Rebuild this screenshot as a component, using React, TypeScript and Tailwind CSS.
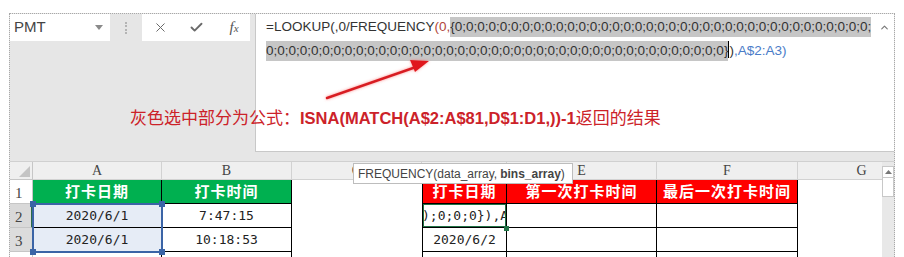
import { X, Check, ChevronUp } from 'lucide-react';

const zeros = (n: number) => '0;'.repeat(n);

const cjk = "font-['Noto_Sans_CJK_SC',sans-serif]";
const mono = "font-['DejaVu_Sans_Mono',monospace]";
const serif = "font-['Liberation_Serif',serif]";

const FormulaBar = () => (
  <div className="flex h-[138px] shrink-0">
    {/* name box + buttons */}
    <div className="flex w-[245px] items-start">
      <div className="flex h-[27px] w-[100px] items-center justify-between bg-white pl-[4px] pr-[7px]">
        <span className="text-[15px] text-[#444]">PMT</span>
        <svg width="8" height="5" viewBox="0 0 8 5">
          <path d="M0 0h8L4 5z" fill="#8a8a8a" />
        </svg>
      </div>
      <div className="flex h-[27px] w-[32px] items-center justify-center">
        <div className="h-[12px] border-l-2 border-dotted border-[#b4b4b4]" />
      </div>
      <div className="grid h-[27px] w-[108px] grid-cols-3 place-items-center bg-white">
        <X className="h-[15px] w-[15px] text-[#6a6a6a]" strokeWidth={1.6} />
        <Check className="h-[15px] w-[15px] text-[#6a6a6a]" strokeWidth={3} />
        <span className={`${serif} pl-[4px] text-[15px] italic text-[#555]`}>
          f<span className="text-[11px]">x</span>
        </span>
      </div>
    </div>

    {/* formula text */}
    <div className="relative flex-1 border-b border-l border-[#c8c8c8] bg-white pl-[10px] pt-[3px] text-[13.5px] text-[#333]">
      <div className="h-[21px] whitespace-nowrap leading-[20px]">
        =LOOKUP(,0/FREQUENCY<span className="text-[#b2473b]">(0,</span>
        <span className="inline-block h-[20px] bg-[#c6c6c6]">{'{'}{zeros(37)}</span>
      </div>
      <div className="h-[21px] whitespace-nowrap leading-[20px]">
        <span className="inline-block h-[20px] bg-[#c6c6c6]">{zeros(40)}0{'}'}</span>
        <span className="inline-block h-[17px] w-px translate-y-[3px] bg-black" />
        <span>)</span>
        <span className="text-[#4a7cc8]">,A$2:A3)</span>
      </div>
      <ChevronUp className="absolute right-[4px] top-[8px] h-[11px] w-[11px] text-[#777]" strokeWidth={2.5} />
    </div>
  </div>
);

const head = 'flex items-center justify-center border-b border-r border-[#d2d2d2] bg-[#efefef] text-[14px] text-[#444]';
const rowHead = `flex items-end pl-[5px] pb-[1px] border-b border-r border-[#c6c6c6] ${serif} text-[15px] leading-[18px] text-[#444]`;
const tb = 'border-b border-r border-black';
const val = `flex items-center justify-center ${mono} text-[13px] text-[#222]`;
const hdr = `flex items-center justify-center ${cjk} text-[15px] font-bold tracking-[1px] text-white`;

const Sheet = () => (
  <div className="flex min-h-0 flex-1 overflow-hidden border-t border-[#d0d0d0]">
    <div className="relative min-w-0 flex-1 overflow-hidden">
      <div className="grid grid-cols-[23px_129px_130px_130px_85px_150px_141px_128px] grid-rows-[18px_24px_24px_24px_24px] bg-white">
        {/* column headers */}
        <div className="flex items-end justify-end border-b border-r border-[#c6c6c6] bg-[#efefef] p-[2px]">
          <svg width="11" height="11" viewBox="0 0 11 11">
            <path d="M11 0V11H0z" fill="#c4c4c4" />
          </svg>
        </div>
        {['A', 'B', 'C', 'D', 'E', 'F', 'G'].map((c) => (
          <div key={c} className={`${head} ${serif}`}>
            {c}
          </div>
        ))}

        {/* row 1 */}
        <div className={rowHead}>1</div>
        <div className={`${tb} ${hdr} bg-[#00b050]`}>打卡日期</div>
        <div className={`${tb} ${hdr} bg-[#00b050]`}>打卡时间</div>
        <div />
        <div className={`${tb} border-l ${hdr} bg-[#ff0000]`}>打卡日期</div>
        <div className={`${tb} ${hdr} bg-[#ff0000]`}>第一次打卡时间</div>
        <div className={`${tb} ${hdr} bg-[#ff0000]`}>最后一次打卡时间</div>
        <div />

        {/* row 2 */}
        <div className={`${rowHead} bg-[#d9d9d9] border-r-2 border-r-[#2b6b46]`}>2</div>
        <div className={`${tb} ${val} bg-[#e6ecf6]`}>2020/6/1</div>
        <div className={`${tb} ${val}`}>7:47:15</div>
        <div />
        <div className={`${tb} border-l ${mono} relative overflow-hidden whitespace-nowrap text-[13px] leading-[23px] text-[#222]`}>
          <span className="-ml-[1px]">{');0;0;0}),A$'}</span>
          <div className="absolute -inset-px border-2 border-[#217346]" />
        </div>
        <div className={tb} />
        <div className={tb} />
        <div />

        {/* row 3 */}
        <div className={`${rowHead} bg-[#dcdcdc]`}>3</div>
        <div className={`${tb} ${val} bg-[#e6ecf6]`}>2020/6/1</div>
        <div className={`${tb} ${val}`}>10:18:53</div>
        <div />
        <div className={`${tb} border-l ${val}`}>2020/6/2</div>
        <div className={tb} />
        <div className={tb} />
        <div />

        {/* row 4, only its top edge shows */}
        <div className={rowHead} />
        <div className={tb} />
        <div className={tb} />
        <div />
        <div className={`${tb} border-l`} />
        <div className={tb} />
        <div className={tb} />
        <div />
      </div>

      {/* referenced range A2:A3 */}
      <div className="absolute left-[22px] top-[41px] h-[50px] w-[131px] border-2 border-[#3b64a6]">
        <div className="absolute -left-[4px] -top-[4px] h-[6px] w-[6px] bg-[#3b64a6]" />
        <div className="absolute -right-[4px] -top-[4px] h-[6px] w-[6px] bg-[#3b64a6]" />
        <div className="absolute -bottom-[4px] -left-[4px] h-[6px] w-[6px] bg-[#3b64a6]" />
        <div className="absolute -bottom-[4px] -right-[4px] h-[6px] w-[6px] bg-[#3b64a6]" />
      </div>
      <div className="absolute left-[494px] top-[64px] h-[5px] w-[5px] bg-[#217346]" />
    </div>

    {/* vertical scrollbar */}
    <div className="flex w-[12px] flex-col bg-[#e8e8e8] pt-[4px]">
      <div className="flex h-[12px] items-center justify-center border border-[#c8c8c8] bg-white">
        <svg width="7" height="4" viewBox="0 0 7 4">
          <path d="M0 4L3.5 0L7 4z" fill="#777" />
        </svg>
      </div>
      <div className="h-[19px] border border-t-0 border-[#c8c8c8] bg-white" />
    </div>
  </div>
);

export default function App() {
  return (
    <div className="relative h-[257px] w-[904px] overflow-hidden bg-white px-[9px] pt-[13px] font-['Liberation_Sans',sans-serif]">
      <div className="flex h-full flex-col border-l border-r border-t border-dotted border-[#a8a8a8] bg-[#e6e6e6]">
        <FormulaBar />
        <div className="h-[9px] shrink-0" />
        <Sheet />
      </div>

      {/* red arrow */}
      <svg className="absolute left-[318px] top-[52px]" width="124" height="56" viewBox="318 52 124 56">
        <defs>
          <filter id="glow" x="-20%" y="-50%" width="140%" height="200%">
            <feDropShadow dx="0" dy="0" stdDeviation="1.5" floodColor="#ff6060" floodOpacity="0.7" />
          </filter>
        </defs>
        <g filter="url(#glow)">
          <line x1="327" y1="98" x2="416" y2="67" stroke="#d81e24" strokeWidth="2.5" strokeLinecap="round" />
          <path d="M429 61L410 60L415 72z" fill="#e0151c" />
        </g>
      </svg>

      {/* annotation */}
      <div className="absolute left-[130px] top-[106px] whitespace-nowrap leading-[22px] text-[#cc2229]">
        <span className={`${cjk} text-[17px]`}>灰色选中部分为公式：</span>
        <span className="text-[16.5px] font-bold">ISNA(MATCH(A$2:A$81,D$1:D1,))-1</span>
        <span className={`${cjk} text-[17px]`}>返回的结果</span>
      </div>

      {/* function tooltip */}
      <div className="absolute left-[353px] top-[163px] flex h-[21px] w-[220px] items-center border border-[#bdbdbd] bg-white pl-[4px] text-[12px] text-[#444] whitespace-nowrap">
        FREQUENCY(data_array, <span className="ml-[3px] font-bold">bins_array</span>)
      </div>
    </div>
  );
}
